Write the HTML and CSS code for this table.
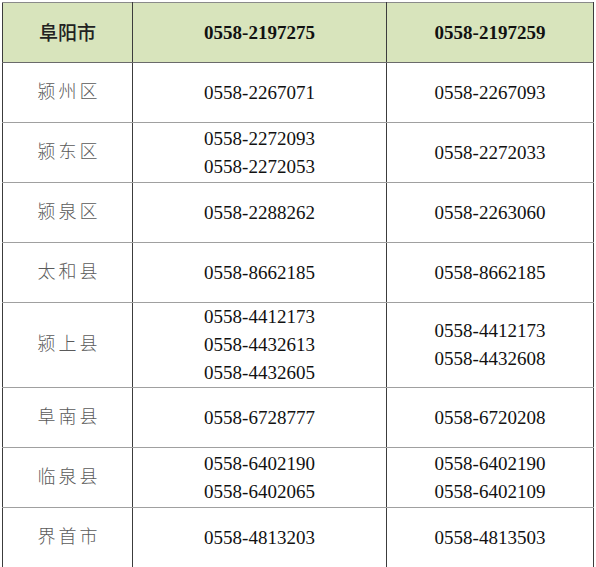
FILE: index.html
```html
<!DOCTYPE html>
<html lang="zh">
<head>
<meta charset="utf-8">
<link rel="stylesheet" href="styles.css">
</head>
<body>
<table class="tel">
  <colgroup><col class="c1"><col class="c2"><col class="c3"></colgroup>
  <tr class="head"><td class="name">阜阳市</td><td>0558-2197275</td><td>0558-2197259</td></tr>
  <tr><td class="name">颍州区</td><td>0558-2267071</td><td>0558-2267093</td></tr>
  <tr><td class="name">颍东区</td><td>0558-2272093<br>0558-2272053</td><td>0558-2272033</td></tr>
  <tr><td class="name">颍泉区</td><td>0558-2288262</td><td>0558-2263060</td></tr>
  <tr><td class="name">太和县</td><td>0558-8662185</td><td>0558-8662185</td></tr>
  <tr class="tall"><td class="name">颍上县</td><td>0558-4412173<br>0558-4432613<br>0558-4432605</td><td>0558-4412173<br>0558-4432608</td></tr>
  <tr><td class="name">阜南县</td><td>0558-6728777</td><td>0558-6720208</td></tr>
  <tr><td class="name">临泉县</td><td>0558-6402190<br>0558-6402065</td><td>0558-6402190<br>0558-6402109</td></tr>
  <tr><td class="name">界首市</td><td>0558-4813203</td><td>0558-4813503</td></tr>
</table>
<div class="next"></div>
</body>
</html>
```
FILE: styles.css
```css
html, body {
  margin: 0;
  padding: 0;
  background: #ffffff;
}
body {
  padding: 2px 0 0 2px;
  overflow: hidden;
}
.tel {
  border-collapse: collapse;
  table-layout: fixed;
  width: 591px;
  font-family: "Liberation Serif", "Times New Roman", serif;
  font-size: 19px;
  color: #111;
}
.c1 { width: 130px; }
.c2 { width: 254px; }
.c3 { width: 207px; }
.tel td {
  border-left: 1px solid #3c3c3c;
  border-right: 1px solid #3c3c3c;
  border-top: 1px solid #a0a0a0;
  border-bottom: 1px solid #a0a0a0;
  text-align: center;
  vertical-align: middle;
  line-height: 28px;
  height: 59px;
  padding: 0;
}
.tel tr.tall td { height: 83px; }
.tel td.name {
  font-family: "Noto Sans CJK SC", sans-serif;
  font-weight: 300;
  font-size: 18px;
  letter-spacing: 3px;
  text-indent: 3px;
  color: #5a5a5a;
  padding-bottom: 6px;
  height: 53px;
}
.tel tr.tall td.name { height: 77px; }
.tel tr.head td {
  background: #d8e4bc;
  font-weight: bold;
  color: #111;
  border-top-color: #8a8a8a;
  border-bottom-color: #6a6a6a;
}
.tel tr.head td.name {
  font-weight: 500;
  font-size: 19px;
  letter-spacing: 0;
  text-indent: 0;
  color: #222;
  padding-bottom: 2px;
  height: 57px;
}
.next {
  width: 591px;
  height: 20px;
  background: #d8e4bc;
  border-top: 1px solid #8a8a8a;
}
```
